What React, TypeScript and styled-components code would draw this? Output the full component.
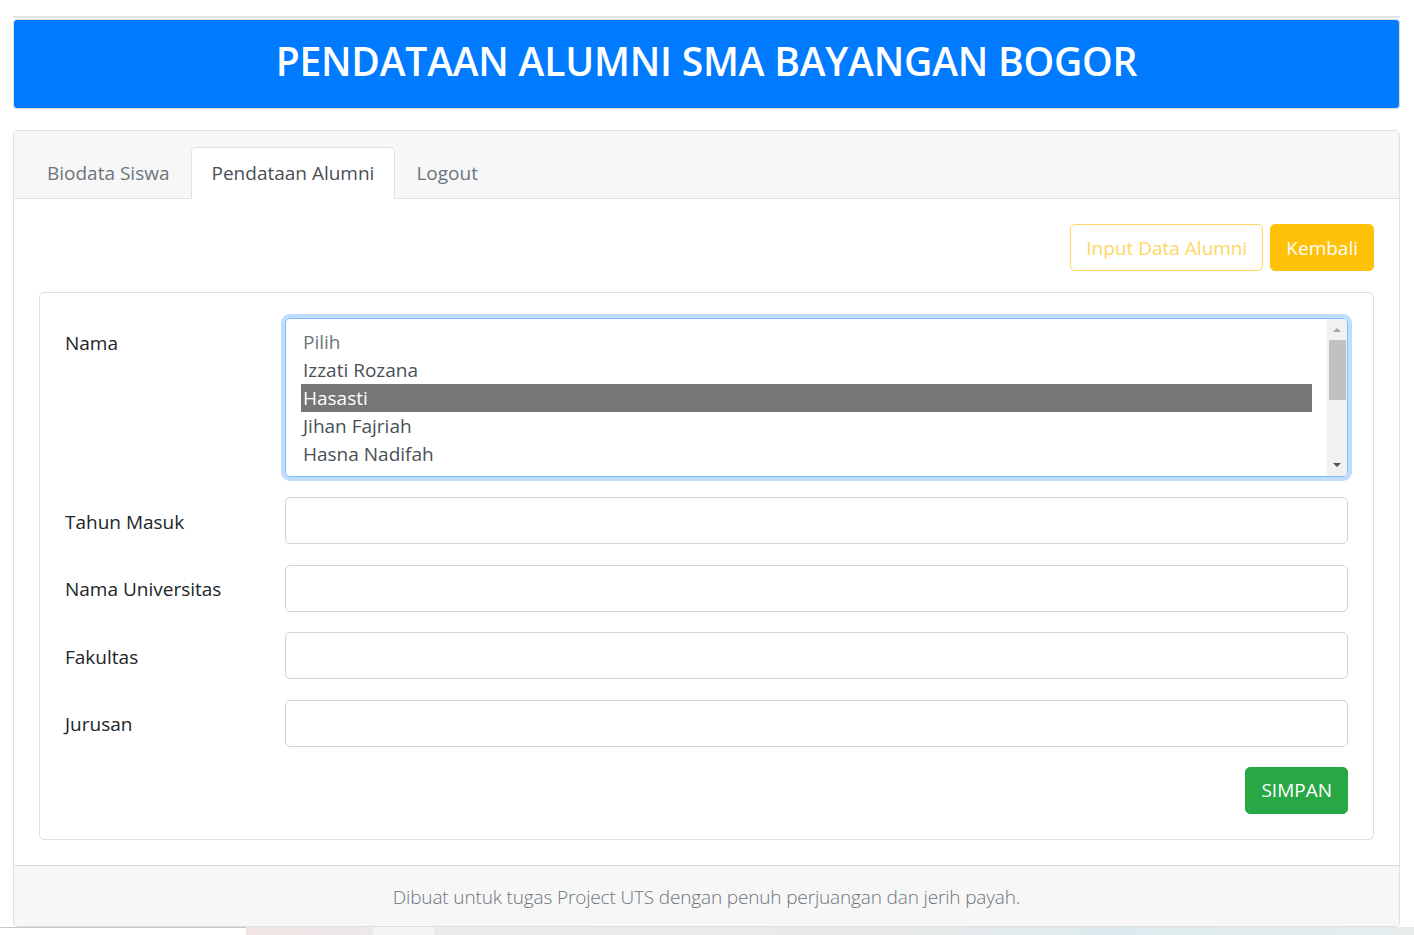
import React from 'react';
import styled, { createGlobalStyle, css } from 'styled-components';

const GlobalStyle = createGlobalStyle`
  html, body {
    margin: 0;
    padding: 0;
    background: #fff;
    overflow: hidden;
  }
  body {
    font-family: "Open Sans", "Noto Sans", "Liberation Sans", sans-serif;
    font-size: 19px;
    color: #212529;
  }
  * { box-sizing: border-box; }
`;

const Page = styled.div`
  padding: 16px 14px 0 13px;
`;

const TopRule = styled.div`
  height: 2px;
  background: #e3e3e3;
  margin-bottom: 1px;
`;

const Header = styled.header`
  background: #007bff;
  border: 1px solid #dcdcdc;
  border-radius: 4px;
  height: 90px;
  padding-bottom: 5px;
  display: flex;
  align-items: center;
  justify-content: center;
`;

const Title = styled.h1`
  margin: 0;
  color: #fff;
  font-size: 39px;
  font-weight: 600;
  letter-spacing: -0.2px;
  line-height: 1.2;
`;

const Card = styled.section`
  margin-top: 21px;
  border: 1px solid rgba(0, 0, 0, 0.125);
  border-radius: 5px;
  background: #fff;
  overflow: hidden;
`;

const CardHeader = styled.div`
  background: #f7f7f7;
  padding: 16px 0 0 12px;
  border-bottom: 1px solid #dee2e6;
  display: flex;
`;

const Tab = styled.div<{ $active?: boolean }>`
  padding: 10px 20px;
  line-height: 30px;
  border: 1px solid transparent;
  border-radius: 5px 5px 0 0;
  margin-bottom: -1px;
  color: #6c757d;
  ${p => p.$active && css`
    background: #fff;
    color: #495057;
    border-color: #dee2e6 #dee2e6 #fff;
  `}
`;

const CardBody = styled.div`
  padding: 25px;
`;

const Actions = styled.div`
  display: flex;
  justify-content: flex-end;
  gap: 7px;
`;

const Button = styled.button<{ $variant: 'outline' | 'warning' | 'success' }>`
  font-family: inherit;
  font-size: 19px;
  line-height: 30px;
  padding: 7.5px 15px;
  border-radius: 5px;
  border: 1px solid transparent;
  ${p => p.$variant === 'outline' && css`
    background: transparent;
    color: #ffc107;
    border-color: #ffc107;
    opacity: 0.65;
  `}
  ${p => p.$variant === 'warning' && css`
    background: #ffc107;
    color: #fff;
    border-color: #ffc107;
  `}
  ${p => p.$variant === 'success' && css`
    background: #28a745;
    color: #fff;
    border-color: #28a745;
  `}
`;

const InnerCard = styled.div`
  margin-top: 21px;
  border: 1px solid rgba(0, 0, 0, 0.125);
  border-radius: 5px;
  padding: 25px;
`;

const FormRow = styled.div`
  display: grid;
  grid-template-columns: 220px 1fr;
  margin-bottom: 20.4px;
`;

const Label = styled.label`
  padding-top: 9.5px;
  line-height: 30px;
  color: #212529;
`;

const Input = styled.input`
  display: block;
  width: 100%;
  height: 47px;
  padding: 7.5px 15px;
  font-family: inherit;
  font-size: 19px;
  color: #495057;
  border: 1px solid #ced4da;
  border-radius: 5px;
  background: #fff;
`;

const ListBox = styled.div`
  position: relative;
  height: 159px;
  border: 1px solid #80bdff;
  border-radius: 5px;
  box-shadow: 0 0 0 4px rgba(0, 123, 255, 0.25);
  padding: 8.5px 35px 7.5px 15px;
  color: #495057;
  overflow: hidden;
`;

const Option = styled.div<{ $selected?: boolean; $muted?: boolean }>`
  line-height: 28px;
  height: 28px;
  padding-left: 2px;
  color: ${p => (p.$selected ? '#fff' : p.$muted ? '#6c757d' : '#495057')};
  background: ${p => (p.$selected ? '#767676' : 'transparent')};
`;

const ScrollTrack = styled.div`
  position: absolute;
  top: 0;
  right: 0;
  bottom: 0;
  width: 20px;
  background: #f1f1f1;
`;

const ScrollThumb = styled.div`
  position: absolute;
  left: 2px;
  right: 1px;
  top: 21px;
  height: 60px;
  background: #c1c1c1;
`;

const Arrow = styled.div<{ $down?: boolean }>`
  position: absolute;
  left: 6px;
  width: 0;
  height: 0;
  border-left: 4px solid transparent;
  border-right: 4px solid transparent;
  ${p => p.$down
    ? css`bottom: 9px; border-top: 4px solid #505050;`
    : css`top: 9px; border-bottom: 4px solid #a3a3a3;`}
`;

const SubmitRow = styled.div`
  display: flex;
  justify-content: flex-end;
`;

const CardFooter = styled.footer`
  background: #f7f7f7;
  border-top: 1px solid rgba(0, 0, 0, 0.125);
  padding: 16px 25px 14px;
  line-height: 30px;
  text-align: center;
  color: #6c757d;
  font-weight: 300;
  letter-spacing: -0.15px;
`;

const BottomStrip = styled.div`
  display: flex;
  height: 10px;
`;

const StripPart = styled.div<{ $w: string; $bg: string; $border?: boolean }>`
  flex: ${p => p.$w};
  background: ${p => p.$bg};
  border-top: ${p => (p.$border ? '1px solid #c8c8c8' : 'none')};
`;

const names = ['Pilih', 'Izzati Rozana', 'Hasasti', 'Jihan Fajriah', 'Hasna Nadifah'];
const fields = ['Tahun Masuk', 'Nama Universitas', 'Fakultas', 'Jurusan'];

export default function App() {
  return (
    <>
      <GlobalStyle />
      <Page>
        <TopRule />
        <Header>
          <Title>PENDATAAN ALUMNI SMA BAYANGAN BOGOR</Title>
        </Header>
        <Card>
          <CardHeader>
            <Tab>Biodata Siswa</Tab>
            <Tab $active>Pendataan Alumni</Tab>
            <Tab>Logout</Tab>
          </CardHeader>
          <CardBody>
            <Actions>
              <Button $variant="outline" disabled>Input Data Alumni</Button>
              <Button $variant="warning">Kembali</Button>
            </Actions>
            <InnerCard>
              <FormRow>
                <Label>Nama</Label>
                <ListBox>
                  {names.map((n, i) => (
                    <Option key={n} $muted={i === 0} $selected={n === 'Hasasti'}>{n}</Option>
                  ))}
                  <ScrollTrack>
                    <Arrow />
                    <ScrollThumb />
                    <Arrow $down />
                  </ScrollTrack>
                </ListBox>
              </FormRow>
              {fields.map(f => (
                <FormRow key={f}>
                  <Label>{f}</Label>
                  <Input type="text" />
                </FormRow>
              ))}
              <SubmitRow>
                <Button $variant="success">SIMPAN</Button>
              </SubmitRow>
            </InnerCard>
          </CardBody>
          <CardFooter>Dibuat untuk tugas Project UTS dengan penuh perjuangan dan jerih payah.</CardFooter>
        </Card>
      </Page>
      <BottomStrip>
        <StripPart $w="0 0 246px" $bg="#fff" $border />
        <StripPart $w="0 0 127px" $bg="linear-gradient(90deg, #f2e4e4, #ebe9e9)" />
        <StripPart $w="0 0 61px" $bg="#f5f5f5" />
        <StripPart $w="1" $bg="linear-gradient(90deg, #ebebeb 0%, #e9e9e9 45%, #dcebee 70%, #e6ecec 100%)" />
      </BottomStrip>
    </>
  );
}
